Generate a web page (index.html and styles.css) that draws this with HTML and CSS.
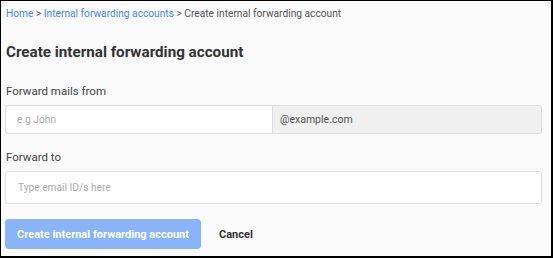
FILE: index.html
```html
<!DOCTYPE html>
<html lang="en">
<head>
  <meta charset="UTF-8" />
  <meta name="viewport" content="width=device-width, initial-scale=1.0"/>
  <title>Create internal forwarding account</title>
  <link rel="stylesheet" href="styles.css">
</head>
<body>
  <div class="frame">
    <div class="crumbs">
      <a href="#">Home</a> &gt; <a href="#">Internal forwarding accounts</a> &gt; Create internal forwarding account
    </div>

    <h2>Create internal forwarding account</h2>

    <form class="fwd-form">
      <label class="lbl" for="fromName">Forward mails from</label>
      <div class="input-group">
        <input type="text" id="fromName" placeholder="e.g John" />
        <span class="addon">@example.com</span>
      </div>

      <label class="lbl lbl-to" for="toAddr">Forward to</label>
      <input type="text" id="toAddr" class="to-input" placeholder="Type email ID/s here" />

      <div class="actions">
        <button type="submit" class="btn" disabled>Create internal forwarding account</button>
        <a href="#" class="cancel">Cancel</a>
      </div>
    </form>
  </div>
</body>
</html>
```

FILE: styles.css
```css
* { box-sizing: border-box; }
body {
  margin: 0;
  font-family: Roboto, "Liberation Sans", Arial, sans-serif;
  background: #fff;
}
.frame {
  width: 553px;
  height: 258px;
  border-style: solid;
  border-color: #000;
  border-width: 1px 2px 2px 1px;
  background: #fafafa;
  padding: 5px 0 0 4px;
  color: #333;
}
.crumbs { font-size: 10.2px; line-height: 16px; color: #555; padding-left: 1px; }
.crumbs a { color: #4a86e8; text-decoration: none; }
h2 {
  margin: 20px 0 0;
  font-size: 15.2px;
  line-height: 20px;
  font-weight: bold;
  color: #333;
  padding-left: 1px;
}
.fwd-form { width: 537px; }
.lbl {
  display: block;
  margin-top: 21px;
  font-size: 11.5px;
  line-height: 16px;
  color: #444;
  padding-left: 1px;
}
.lbl-to { margin-top: 15px; }
.input-group {
  display: flex;
  margin-top: 6px;
  height: 29px;
}
.input-group input {
  width: 267px;
  height: 29px;
  border: 1px solid #ddd;
  border-right: none;
  border-radius: 3px 0 0 3px;
  padding: 0 11px;
  font: 10.2px Roboto, "Liberation Sans", Arial, sans-serif;
  background: #fff;
}
.addon {
  flex: 1;
  display: flex;
  align-items: center;
  background: #f0f0f0;
  border: 1px solid #ddd;
  border-radius: 0 3px 3px 0;
  padding: 0 7px;
  font-size: 10.5px;
  color: #555;
}
input::placeholder { color: #aaa; }
.to-input {
  display: block;
  width: 537px;
  height: 33px;
  margin-top: 6px;
  border: 1px solid #e2e2e2;
  border-radius: 3px;
  padding: 0 12px;
  background: #fff;
  font: 10.2px Roboto, "Liberation Sans", Arial, sans-serif;
}
.actions {
  display: flex;
  align-items: center;
  margin-top: 15px;
}
.btn {
  width: 196px;
  height: 30px;
  background: #8ab4f8;
  color: #fff;
  border: none;
  border-radius: 4px;
  font: bold 11px Roboto, "Liberation Sans", Arial, sans-serif;
  padding: 0;
}
.cancel {
  margin-left: 18px;
  font-size: 11px;
  font-weight: bold;
  color: #333;
  text-decoration: none;
}
```
